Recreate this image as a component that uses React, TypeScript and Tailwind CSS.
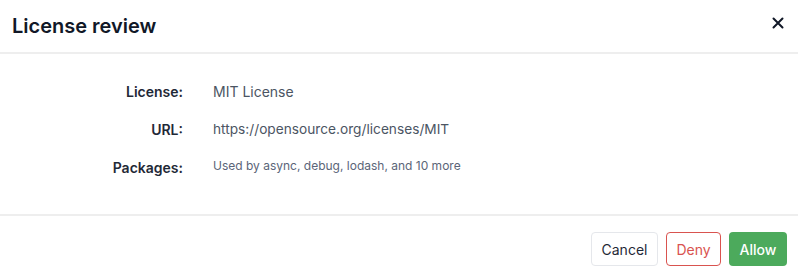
import React from "react";

export default function App() {
  return (
    <div className="w-[798px] h-[279px] bg-white overflow-hidden text-[#1f2937]" style={{ fontFamily: "Inter, 'Noto Sans', sans-serif" }}>
      <div className="flex items-center justify-between h-[54px] pl-[12px] pr-[13px] border-b-2 border-[#eeeeee]">
        <h1 className="text-[20px] font-semibold leading-none text-[#111827]">License review</h1>
        <button className="flex items-center justify-center w-[14px] h-[14px] mt-[-7px]">
          <svg width="12" height="12" viewBox="0 0 12 12" fill="none" stroke="#111827" strokeWidth="2" strokeLinecap="round">
            <path d="M1.5 1.5L10.5 10.5M10.5 1.5L1.5 10.5" />
          </svg>
        </button>
      </div>
      <div className="pt-[18px] pb-[28px] border-b-2 border-[#eeeeee]">
        <div className="flex items-center h-[38px]">
          <div className="w-[183px] text-right text-[14px] font-semibold text-[#1f2937]">License:</div>
          <div className="pl-[30px] text-[14px] text-[#4b5563]">MIT License</div>
        </div>
        <div className="flex items-center h-[38px]">
          <div className="w-[183px] text-right text-[14px] font-semibold text-[#1f2937]">URL:</div>
          <div className="pl-[30px] text-[13.7px] text-[#4b5563]">https://opensource.org/licenses/MIT</div>
        </div>
        <div className="flex items-center h-[38px]">
          <div className="w-[183px] text-right text-[14px] font-semibold text-[#1f2937]">Packages:</div>
          <div className="pl-[30px] text-[12px] text-[#5b6578] mt-[-3px]">Used by async, debug, lodash, and 10 more</div>
        </div>
      </div>
      <div className="flex justify-end gap-[8px] pt-[16px] pr-[11px]">
        <button className="h-[34px] w-[67px] rounded-[4px] border border-[#e5e7eb] bg-white text-[14px] text-[#1f2937]">Cancel</button>
        <button className="h-[34px] w-[55px] rounded-[4px] border border-[#d9534f] bg-white text-[14px] text-[#d9534f]">Deny</button>
        <button className="h-[34px] w-[58px] rounded-[4px] bg-[#4caa5c] text-[14px] font-medium text-white">Allow</button>
      </div>
    </div>
  );
}
